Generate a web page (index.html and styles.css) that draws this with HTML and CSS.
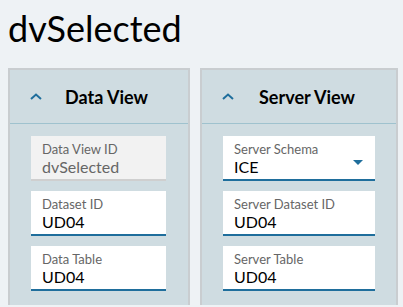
FILE: index.html
```html
<!DOCTYPE html>
<html lang="en">
<head>
    <meta charset="UTF-8">
    <meta name="viewport" content="width=device-width, initial-scale=1.0">
    <title>dvSelected</title>
    <link rel="stylesheet" href="styles.css">
</head>
<body>
    <h1 class="title">dvSelected</h1>
    <div class="panels">
        <section class="panel panel-data">
            <div class="panel-header">
                <svg class="chevron" width="12" height="7" viewBox="0 0 12 7"><path d="M1 6 L6 1.5 L11 6" fill="none" stroke="#1f6e9c" stroke-width="2"/></svg>
                <h2>Data View</h2>
            </div>
            <div class="panel-body">
                <div class="field disabled">
                    <label>Data View ID</label>
                    <div class="value">dvSelected</div>
                </div>
                <div class="field">
                    <label>Dataset ID</label>
                    <div class="value">UD04</div>
                </div>
                <div class="field">
                    <label>Data Table</label>
                    <div class="value">UD04</div>
                </div>
            </div>
        </section>
        <section class="panel panel-server">
            <div class="panel-header">
                <svg class="chevron" width="12" height="7" viewBox="0 0 12 7"><path d="M1 6 L6 1.5 L11 6" fill="none" stroke="#1f6e9c" stroke-width="2"/></svg>
                <h2>Server View</h2>
            </div>
            <div class="panel-body">
                <div class="field select">
                    <label>Server Schema</label>
                    <div class="value">ICE</div>
                    <span class="caret"></span>
                </div>
                <div class="field">
                    <label>Server Dataset ID</label>
                    <div class="value">UD04</div>
                </div>
                <div class="field">
                    <label>Server Table</label>
                    <div class="value">UD04</div>
                </div>
            </div>
        </section>
    </div>
</body>
</html>
```

FILE: styles.css
```css
body {
    margin: 0;
    padding: 8px;
    background-color: #eef2f5;
    font-family: Lato, "Liberation Sans", sans-serif;
    color: #000;
}
.title {
    margin: 0;
    font-size: 36px;
    font-weight: normal;
    line-height: 40px;
}
.panels {
    display: flex;
    gap: 10px;
    margin-top: 20px;
}
.panel {
    background-color: #cfdce1;
    border: 2px solid #c9cdd0;
    border-bottom: none;
}
.panel-data {
    flex: 0 0 178px;
}
.panel-server {
    flex: 0 0 194px;
}
.panel-header {
    display: flex;
    align-items: center;
    height: 53px;
    padding-left: 20px;
    border-bottom: 1px solid #9fc2ce;
}
.chevron {
    margin-right: 23px;
}
.panel-server .chevron {
    margin-right: 25px;
}
.panel-header h2 {
    margin: 0;
    font-size: 18px;
    font-weight: bold;
}
.panel-body {
    display: flex;
    flex-direction: column;
    gap: 10px;
    padding: 12px 22px 14px 21px;
}
.panel-server .panel-body {
    padding-right: 21px;
}
.field {
    position: relative;
    box-sizing: border-box;
    height: 45px;
    padding: 5px 11px 0;
    background-color: #fff;
    border-bottom: 2px solid #1f6e9c;
}
.field label {
    display: block;
    font-size: 13px;
    line-height: 16px;
    color: #666;
}
.field .value {
    font-size: 16px;
    line-height: 20px;
}
.field.disabled {
    background-color: #f2f2f2;
    border-bottom-color: #cfcfcf;
}
.field.disabled .value {
    color: #666;
}
.caret {
    position: absolute;
    right: 12px;
    top: 24px;
    width: 0;
    height: 0;
    border-left: 5px solid transparent;
    border-right: 5px solid transparent;
    border-top: 5px solid #1f6e9c;
}
```
